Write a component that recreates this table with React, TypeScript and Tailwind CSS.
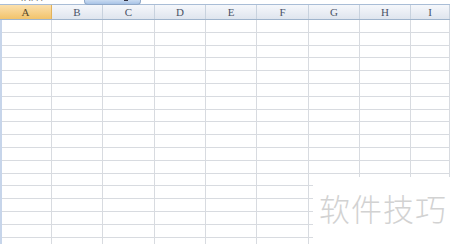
const cols = ["A", "B", "C", "D", "E", "F", "G", "H", "I"];
const widths = ["w-[52px]", "w-[51px]", "w-[52px]", "w-[51px]", "w-[51px]", "w-[52px]", "w-[51px]", "w-[51px]", "flex-1"];
const rows = Array.from({ length: 18 }, (_, i) => i);

export default function App() {
  return (
    <div className="relative h-[244px] w-[450px] overflow-hidden bg-white font-['Liberation_Serif',serif]">
      {/* ribbon remnant */}
      <div className="relative flex h-[5px] items-start border-b border-[#a9bdd6] bg-white">
        <span className="-mt-[11px] ml-[19px] text-[12px] leading-none text-[#333] font-['Noto_Sans_CJK_SC',sans-serif]">
          粘贴
        </span>
        <div className="ml-[41px] flex h-[5px] w-[57px] justify-end rounded-b-[4px] border border-t-0 border-[#8fa8c8] bg-gradient-to-b from-[#c9dbf1] to-[#a8c3e6] pr-[12px]">
          <div className="h-[1px] w-[4px] bg-[#334]" />
        </div>
      </div>

      {/* column headers */}
      <div className="flex h-[15px] border-b border-[#9fb4cc]">
        {cols.map((c, i) => (
          <div
            key={c}
            className={`${widths[i]} flex items-center justify-center border-r text-[11px] leading-none ${
              i === 0
                ? "border-[#e2b25a] bg-gradient-to-b from-[#fbe0ac] to-[#f2c36a] text-[#5a4a2a]"
                : "border-[#c8d2de] bg-gradient-to-b from-[#f5f7fb] to-[#dfe5ee] text-[#4a5366]"
            }`}
          >
            {c}
          </div>
        ))}
      </div>

      {/* grid */}
      <div className="flex flex-col border-l-2 border-[#c7d5ea]">
        {rows.map((r) => (
          <div key={r} className="flex h-[12.8px] shrink-0">
            {cols.map((c, i) => (
              <div
                key={c}
                className={`${i === 0 ? "w-[50px]" : widths[i]} border-r border-b border-[#d8dbe0]`}
              />
            ))}
          </div>
        ))}
      </div>

      {/* watermark */}
      <div className="absolute bottom-0 left-[313px] right-0 top-[177px] bg-white">
        <span className="absolute left-[6px] top-[15px] text-[31px] font-light leading-none tracking-[1px] text-[#d2d2d2] font-['Noto_Sans_CJK_SC',sans-serif]">
          软件技巧
        </span>
      </div>
    </div>
  );
}
